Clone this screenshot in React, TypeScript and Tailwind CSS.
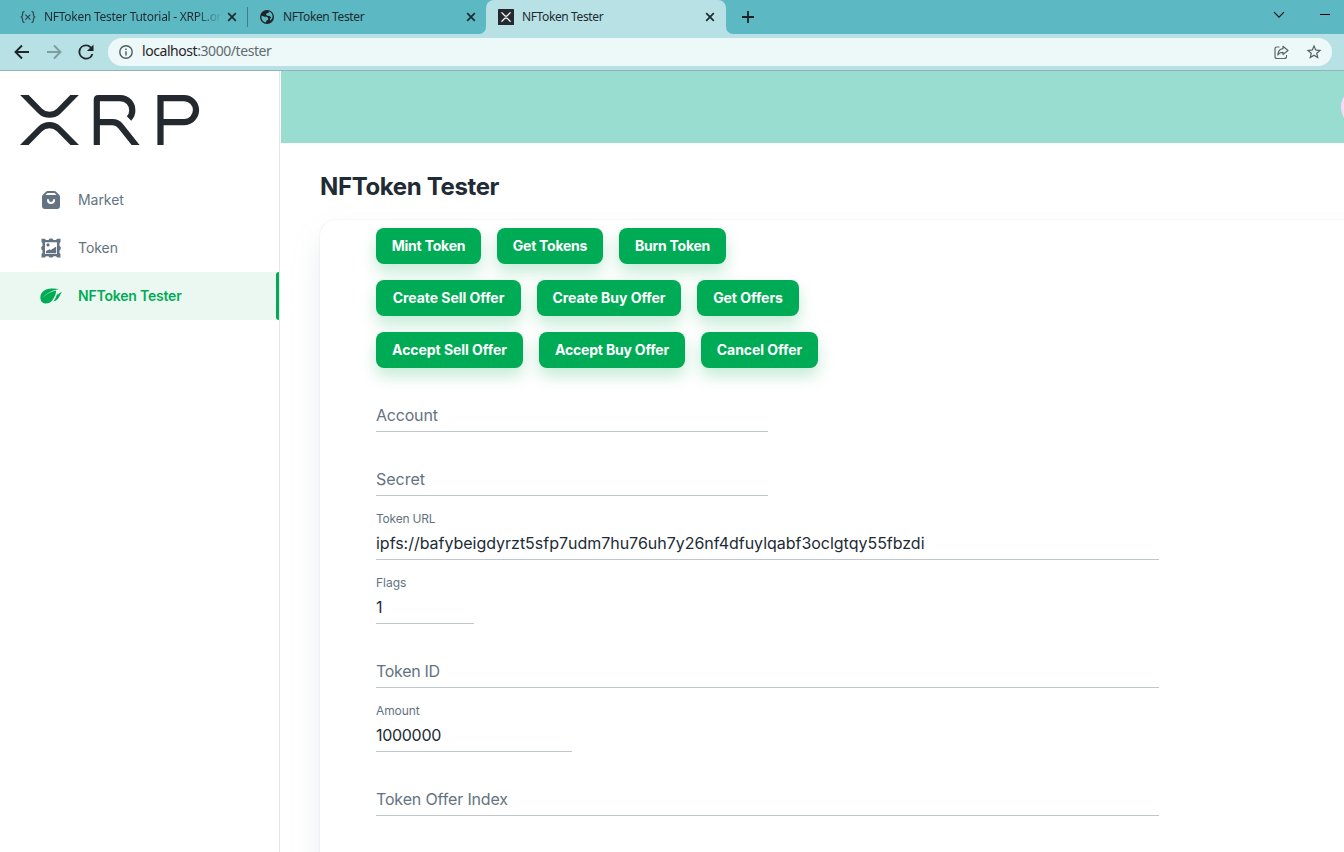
import React from "react";

const CHROME = "font-['Noto_Sans','Open_Sans',sans-serif]";
const XMARK =
  "M437,0h74L357,152.48c-55.77,55.19-146.19,55.19-202,0L.94,0H75L192,115.83a91.11,91.11,0,0,0,127.91,0ZM74.05,424H0L155,270.58c55.77-55.19,146.19-55.19,202,0L512,424H438L320,307.23a91.11,91.11,0,0,0-127.91,0Z";

function Close() {
  return (
    <svg width="10" height="10" viewBox="0 0 10 10" className="shrink-0">
      <path d="M1.2 1.2l7.6 7.6M8.8 1.2L1.2 8.8" stroke="#1c2b2f" strokeWidth="1.7" />
    </svg>
  );
}

function Globe() {
  return (
    <svg width="16" height="16" viewBox="0 0 24 24" className="shrink-0">
      <path
        fill="#202427"
        d="M12 1.5a10.5 10.5 0 1 0 0 21 10.5 10.5 0 0 0 0-21Zm-1.8 18.7A8.3 8.3 0 0 1 3.7 12l.2-1.7 4.6 1.5h3.2l2 1.7v2.6l-2.4 1.2Zm6.4-2.6-.2-2.6 1.8-2.2-2.3-2.3-3.3-.3-2.2-1.6 1.2-2.2 2.6-.5.7-2A8.3 8.3 0 0 1 20.3 12a8.3 8.3 0 0 1-3.7 5.6Z"
      />
    </svg>
  );
}

function TabStrip() {
  return (
    <div className="flex h-[34px] bg-[#b8e1e5] text-[12px] leading-[16px] tracking-[-0.38px] text-[#1d2b30]">
      <div className="flex w-[486px] rounded-br-[7px] bg-[#5cb8c2]">
        <div className="flex w-[247px] items-center pl-5">
          <svg width="16" height="16" viewBox="0 0 16 16" className="shrink-0" fill="none" stroke="#33484e" strokeWidth="1.2">
            <path d="M4.5 2.5C2.5 2.5 2.6 3.6 2.6 5s.1 2.7-1.8 3c1.9.3 1.8 1.6 1.8 3s0 2.5 1.9 2.5M11.5 2.5c2 0 1.9 1.1 1.9 2.5s-.1 2.7 1.8 3c-1.9.3-1.8 1.6-1.8 3s0 2.5-1.9 2.5M5.4 5.6l5 5M10.4 5.6l-5 5" />
          </svg>
          <span className="ml-2 w-[176px] whitespace-nowrap bg-linear-to-r from-[#1d2b30] from-86% to-[#1d2b30]/10 bg-clip-text tracking-[-0.27px] text-transparent">
            NFToken Tester Tutorial - XRPL.or
          </span>
          <span className="ml-[7px] flex"><Close /></span>
        </div>
        <div className="my-[7px] w-px bg-[#3d8088]" />
        <div className="flex w-[238px] items-center pl-[11px]">
          <Globe />
          <span className="ml-2 w-[176px]">NFToken Tester</span>
          <span className="ml-[7px] flex"><Close /></span>
        </div>
      </div>
      <div className="w-[240px] bg-linear-to-b from-[#5cb8c2] from-50% to-[#b8e1e5] to-50%">
        <div className="flex h-full items-center rounded-t-[8px] bg-[#b8e1e5] pl-3">
          <svg width="16" height="16" viewBox="0 0 16 16" className="shrink-0">
            <rect width="16" height="16" rx="0.5" fill="#23292f" />
            <path transform="translate(3 3.5) scale(.0196 .0215)" d={XMARK} fill="#fff" stroke="#fff" strokeWidth="14" />
          </svg>
          <span className="ml-2 w-[176px]">NFToken Tester</span>
          <span className="ml-[7px] flex"><Close /></span>
        </div>
      </div>
      <div className="flex flex-1 items-center rounded-bl-[7px] bg-[#5cb8c2] pl-4">
        <svg width="12" height="12" viewBox="0 0 12 12">
          <path d="M6 0v12M0 6h12" stroke="#1b2326" strokeWidth="1.8" />
        </svg>
        <div className="flex-1" />
        <svg width="12" height="8" viewBox="0 0 12 8" className="mb-1 mr-[35px]">
          <path d="M1 1.2l5 5 5-5" fill="none" stroke="#111" strokeWidth="1.1" />
        </svg>
        <div className="mb-[5px] mr-[14px] h-px w-[10px] bg-black" />
      </div>
    </div>
  );
}

function Toolbar() {
  return (
    <div className="flex h-[37px] items-center border-b border-[#93b3b8] bg-[#b8e1e5] pl-[14px] pr-3">
      <svg width="16" height="16" viewBox="0 0 16 16" fill="none" stroke="#202628" strokeWidth="1.9">
        <path d="M15 8H2M8 1.5L1.5 8 8 14.5" />
      </svg>
      <svg width="16" height="16" viewBox="0 0 16 16" fill="none" stroke="#7f9da1" strokeWidth="1.9" className="ml-4">
        <path d="M1 8h13M8 1.5L14.5 8 8 14.5" />
      </svg>
      <svg width="16" height="16" viewBox="3.500 3.500 17 17" fill="#202628" className="ml-4">
        <path d="M17.65 6.35A7.96 7.96 0 0 0 12 4a8 8 0 1 0 7.73 10h-2.08A6 6 0 1 1 12 6c1.66 0 3.14.69 4.22 1.78L13 11h7V4z" />
      </svg>
      <div className="ml-[14px] flex h-7 flex-1 items-center rounded-full bg-[#edf8f9] pl-[11px] pr-[9px]">
        <svg width="14" height="14" viewBox="0 0 14 14" fill="none" stroke="#4f5a5d" strokeWidth="1.4">
          <circle cx="7" cy="7" r="6.2" />
          <path d="M7 6.2v4.2M7 3.5v1.5" />
        </svg>
        <span className="mb-[2px] ml-[9px] text-[14px] leading-[20px] tracking-[-0.44px] text-[#5f6b6f]">
          <span className="text-[#1f2527]">localhost</span>:3000/tester
        </span>
        <div className="flex-1" />
        <svg width="15" height="15" viewBox="0 0 15 15" fill="none" stroke="#5b6669" strokeWidth="1.2" strokeLinejoin="round">
          <path d="M5.500 2H3Q1 2 1 4v7.500Q1 13.500 3 13.500h7.500q2 0 2-2V10M9 1.300L14 5.500 9 9.500V7.300C6.500 7.200 5 8 3.800 10 4 6.500 6 4 9 3.700Z" />
        </svg>
        <svg width="18" height="18" viewBox="0 0 24 24" fill="#535e61" className="ml-4">
          <path d="m22 9.24-7.19-.62L12 2 9.19 8.63 2 9.24l5.46 4.73L5.82 21 12 17.27 18.18 21l-1.63-7.03zM12 15.4l-3.76 2.27 1-4.28-3.32-2.88 4.38-.38L12 6.1l1.71 4.04 4.38.38-3.32 2.88 1 4.28z" />
        </svg>
      </div>
    </div>
  );
}

function Logo() {
  return (
    <svg width="180" height="50" viewBox="20 95 180 50" className="ml-5 mt-6 block">
      <path transform="translate(20 95) scale(.1152 .1179)" d={XMARK} fill="#23292f" />
      <g fill="none" stroke="#23292f" strokeWidth="6.2">
        <path d="M96.8 145V99.7Q96.8 98.1 98.3 98.1H120C128 98.1 132.3 104 132.3 110.5C132.3 114 131 116.5 129 118.5" />
        <path d="M96.8 122.2H112.5C116 122.2 118.5 123.5 120.5 126L138 148" />
        <path d="M160.5 145V98.1H184a12 12 0 0 1 0 24H161" />
      </g>
    </svg>
  );
}

function NavItem({ icon, label, active }: { icon: React.ReactNode; label: string; active?: boolean }) {
  return (
    <div
      className={
        active
          ? "flex h-12 items-center bg-[#ebf8f1] pl-10 text-[14px] font-semibold tracking-[-0.2px] text-[#00ab55]"
          : "flex h-12 items-center pl-10 text-[14px] tracking-[-0.05px] text-[#637381]"
      }
    >
      <span className="flex w-[22px] justify-center">{icon}</span>
      <span className="mb-[2px] ml-4 flex-1">{label}</span>
      {active && <span className="h-12 w-[3px] rounded-l-[4px] bg-[#00ab55]" />}
    </div>
  );
}

function Sidebar() {
  return (
    <aside className="mr-px w-[280px] shrink-0 border-r border-[#e3e6e9]">
      <Logo />
      <nav className="mt-[31px]">
        <NavItem
          label="Market"
          icon={
            <svg width="24" height="24" viewBox="0 0 24 24" fill="#637381" className="shrink-0">
              <path d="m20.12 6.71-2.83-2.83A3 3 0 0 0 15.17 3H8.83a3 3 0 0 0-2.12.88L3.88 6.71A3 3 0 0 0 3 8.83V18a3 3 0 0 0 3 3h12a3 3 0 0 0 3-3V8.83a3 3 0 0 0-.88-2.12M12 16a4 4 0 0 1-4-4a1 1 0 0 1 2 0a2 2 0 0 0 4 0a1 1 0 0 1 2 0a4 4 0 0 1-4 4M6.41 7l1.71-1.71A1.05 1.05 0 0 1 8.83 5h6.34a1.05 1.05 0 0 1 .71.29L17.59 7Z" />
            </svg>
          }
        />
        <NavItem
          label="Token"
          icon={
            <svg width="20" height="20" viewBox="0 0 20 20" fill="#637381">
              <path
                fillRule="evenodd"
                d="M.5.8h3.300l1.200 1.200h2.500l1.200-1.400h2.600l1.200 1.400H15L16.200.8h3.300v3.300l-1 1.200v2.400l1.200 1.200v2.400l-1.200 1.200v2.400l1 1.200v3.300h-3.300L15 18.200h-2.500l-1.200 1.300H8.700l-1.200-1.300H5l-1.200 1.200H.5v-3.300l1-1.200v-2.400L.3 11.300V8.900l1.200-1.200V5.300L.5 4.100ZM4 4.200v11.800h12V4.200Z"
              />
              <circle cx="7" cy="6.900" r="1.600" />
              <path d="M5 15.300v-2.200l3.500-1.800 1.300.7 5.400-3.600v6.900Z" />
            </svg>
          }
        />
        <NavItem
          active
          label="NFToken Tester"
          icon={
            <svg width="22" height="16" viewBox="0 0 22 16" fill="#00ab55">
              <path d="M.6 11.500C-.5 6 3 1.800 9 .8 12.500.2 16 .3 18.800 1.200 12 2 6 5.500 3 9.500 6.500 6 11 3.500 16 2.600 16.500 6 14 9.500 12.500 12 10.500 15 7.500 15.800 5 15.500 2.500 15 1 13.500.6 11.500Z" />
              <path d="M22 4.200C20 6 19.800 9 17.500 11.300c-1.200 1.200-2.500 1.800-4.300 2.200 2.500-2.500 2.800-5.500 4.600-8.200l-.3 1.800C18.500 5.500 20 4.500 22 4.200Z" />
            </svg>
          }
        />
      </nav>
    </aside>
  );
}

function Btn({ label, w, ls }: { label: string; w: string; ls?: string }) {
  return (
    <button
      className={`${w} ${ls ?? "tracking-[-0.05px]"} h-9 whitespace-nowrap rounded-[8px] bg-[#00ab55] pb-[2px] text-center text-[14px] font-bold text-white shadow-[0_8px_16px_0_rgba(0,171,85,0.24)]`}
    >
      {label}
    </button>
  );
}

function Field({ label, value, w, ls, labelLs }: { label: string; value?: string; w: string; ls?: string; labelLs?: string }) {
  return (
    <div className={`${w} h-16 border-b border-[#bfc6cd]`}>
      <div className="h-4" />
      {value ? (
        <>
          <div className={`h-[14px] text-[12px] leading-[14px] text-[#637381] ${labelLs ?? ""}`}>{label}</div>
          <div className={`mt-[6px] text-[16px] leading-[23px] text-[#212b36] ${ls ?? ""}`}>{value}</div>
        </>
      ) : (
        <div className={`mt-5 text-[16px] leading-[23px] text-[#637381] ${labelLs ?? ""}`}>{label}</div>
      )}
    </div>
  );
}

export default function App() {
  return (
    <div className="flex h-[852px] w-[1344px] flex-col overflow-hidden bg-white">
      <div className={CHROME}>
        <TabStrip />
        <Toolbar />
      </div>
      <div className="flex min-h-0 flex-1 font-['Inter',sans-serif]">
        <Sidebar />
        <main className="min-w-0 flex-1 overflow-hidden">
          <div className="flex h-[72px] items-center justify-end overflow-hidden bg-[#99ddd0]">
            <div className="-mr-[37px] h-10 w-10 shrink-0 rounded-full bg-[#f9d9f7]" />
          </div>
          <h1 className="ml-[39px] mt-[26px] text-[24px] font-bold leading-[36px] tracking-[-0.36px] text-[#212b36]">NFToken Tester</h1>
          <div className="ml-[39px] mt-[15px] h-[700px] w-[1200px] rounded-[16px] bg-white px-14 pt-2 shadow-[0_0_2px_0_rgba(145,158,171,0.24),0_16px_32px_-4px_rgba(145,158,171,0.24)]">
            <div className="flex flex-col gap-4">
              <div className="flex gap-4">
                <Btn label="Mint Token" w="w-[105px]" ls="tracking-[-0.2px]" />
                <Btn label="Get Tokens" w="w-[106px]" ls="tracking-[-0.25px]" />
                <Btn label="Burn Token" w="w-[107px]" ls="tracking-[-0.25px]" />
              </div>
              <div className="flex gap-4">
                <Btn label="Create Sell Offer" w="w-[145px]" />
                <Btn label="Create Buy Offer" w="w-[144px]" />
                <Btn label="Get Offers" w="w-[102px]" />
              </div>
              <div className="flex gap-4">
                <Btn label="Accept Sell Offer" w="w-[147px]" />
                <Btn label="Accept Buy Offer" w="w-[146px]" ls="tracking-[-0.2px]" />
                <Btn label="Cancel Offer" w="w-[117px]" />
              </div>
            </div>
            <Field label="Account" w="w-[392px]" labelLs="tracking-[-0.2px]" />
            <Field label="Secret" w="w-[392px]" />
            <Field
              label="Token URL"
              value="ipfs://bafybeigdyrzt5sfp7udm7hu76uh7y26nf4dfuylqabf3oclgtqy55fbzdi"
              w="w-[783px]"
              ls="tracking-[-0.02px]"
              labelLs="tracking-[-0.2px]"
            />
            <Field label="Flags" value="1" w="w-[98px]" />
            <Field label="Token ID" w="w-[783px]" labelLs="tracking-[-0.3px]" />
            <Field label="Amount" value="1000000" w="w-[196px]" ls="tracking-[-0.3px]" labelLs="tracking-[-0.1px]" />
            <Field label="Token Offer Index" w="w-[783px]" labelLs="tracking-[-0.15px]" />
          </div>
        </main>
      </div>
    </div>
  );
}
